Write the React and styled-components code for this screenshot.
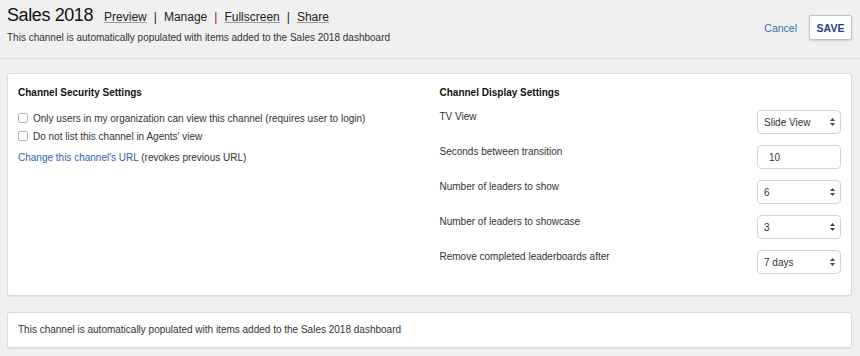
import React, { useState } from 'react'
import styled, { createGlobalStyle } from 'styled-components'

const GlobalStyle = createGlobalStyle`
  html, body {
    margin: 0;
    padding: 0;
    background: #efefef;
    font-family: "Liberation Sans", Arial, Helvetica, sans-serif;
    color: #222;
  }
`

const Page = styled.div`
  width: 860px;
  min-height: 356px;
  background: #efefef;
`

const Header = styled.div`
  display: flex;
  justify-content: space-between;
  align-items: flex-start;
  height: 59px;
  box-sizing: border-box;
  padding: 3px 8px 0 7px;
  border-bottom: 1px solid #dcdcdc;
  background: #f0f0f0;
`

const TitleBlock = styled.div`
  display: flex;
  flex-direction: column;
`

const TitleRow = styled.div`
  display: flex;
  align-items: baseline;
`

const Title = styled.h1`
  margin: 0 11px 0 0;
  font-size: 18px;
  letter-spacing: -0.4px;
  font-weight: normal;
  line-height: 24px;
  color: #111;
`

const NavLink = styled.a`
  font-size: 12px;
  color: #222;
  text-decoration: ${props => (props.plain ? 'none' : 'underline')};
  text-decoration-color: #999;
  cursor: pointer;
`

const Sep = styled.span`
  font-size: 12px;
  margin: 0 7px;
  color: ${props => (props.accent ? '#8a1a1a' : '#222')};
`

const Subtitle = styled.div`
  margin-top: 5px;
  font-size: 10px;
  color: #333;
`

const Actions = styled.div`
  display: flex;
  align-items: center;
  gap: 12px;
  margin-top: 12px;
`

const CancelLink = styled.a`
  font-size: 10.5px;
  color: #3a6fb3;
  cursor: pointer;
`

const SaveButton = styled.button`
  font-family: inherit;
  font-size: 10.5px;
  font-weight: bold;
  color: #1e4384;
  background: #fff;
  border: 1px solid #b7c2d4;
  border-radius: 2px;
  box-shadow: 0 1px 2px rgba(0, 0, 0, 0.15);
  width: 43px;
  height: 25px;
  padding: 0;
`

const Panel = styled.div`
  margin: ${props => props.top || 14}px 8px 0 7px;
  background: #fff;
  border: 1px solid #dadada;
  border-radius: 3px;
  box-shadow: 0 1px 1px rgba(0, 0, 0, 0.06);
  box-sizing: border-box;
  padding: ${props => props.pad || '10px 10px 9px'};
  font-size: 10px;
`

const Columns = styled.div`
  display: grid;
  grid-template-columns: 1fr 1fr;
  column-gap: 20px;
`

const SectionTitle = styled.div`
  font-weight: bold;
  font-size: 10px;
  color: #111;
  margin: 3px 0 ${props => props.space || 13}px;
`

const CheckRow = styled.label`
  display: flex;
  align-items: center;
  height: 18px;
  color: #333;
`

const Box = styled.input`
  width: 10px;
  height: 10px;
  margin: 0 5px 0 0;
  appearance: none;
  border: 1px solid #b4b4b4;
  border-radius: 2px;
  background: #fff;
`

const UrlLine = styled.div`
  margin-top: 7px;
  color: #333;
`

const BlueLink = styled.a`
  color: #2b63b0;
  cursor: pointer;
`

const SettingRow = styled.div`
  display: flex;
  justify-content: space-between;
  align-items: flex-start;
  height: 35px;
  color: #333;
`

const SettingLabel = styled.div`
  padding-top: 0;
`

const SelectWrap = styled.div`
  position: relative;
  width: 84px;
  height: 24px;
  margin-top: -1px;
`

const Field = styled.div`
  box-sizing: border-box;
  width: 100%;
  height: 100%;
  border: 1px solid #d4d4d4;
  border-radius: 4px;
  background: #fff;
  display: flex;
  align-items: center;
  padding-left: ${props => (props.input ? 11 : 6)}px;
  font-size: 10px;
  color: #333;
`

const Arrows = styled.svg`
  position: absolute;
  right: 6px;
  top: 8px;
`

const FooterText = styled.div`
  color: #333;
`

const Select = ({ value }) => (
  <SelectWrap>
    <Field>{value}</Field>
    <Arrows width="5" height="8" viewBox="0 0 5 8">
      <path d="M2.5 0 L5 3 L0 3 Z M0 5 L5 5 L2.5 8 Z" fill="#444" />
    </Arrows>
  </SelectWrap>
)

const settings = [
  { label: 'TV View', value: 'Slide View' },
  { label: 'Seconds between transition', value: '10', input: true },
  { label: 'Number of leaders to show', value: '6' },
  { label: 'Number of leaders to showcase', value: '3' },
  { label: 'Remove completed leaderboards after', value: '7 days' }
]

export default function App() {
  const [checks, setChecks] = useState([false, false])
  const toggle = i => setChecks(prev => prev.map((c, j) => (j === i ? !c : c)))
  const description = 'This channel is automatically populated with items added to the Sales 2018 dashboard'

  return (
    <Page>
      <GlobalStyle />
      <Header>
        <TitleBlock>
          <TitleRow>
            <Title>Sales 2018</Title>
            <NavLink>Preview</NavLink>
            <Sep>|</Sep>
            <NavLink plain>Manage</NavLink>
            <Sep accent>|</Sep>
            <NavLink>Fullscreen</NavLink>
            <Sep>|</Sep>
            <NavLink>Share</NavLink>
          </TitleRow>
          <Subtitle>{description}</Subtitle>
        </TitleBlock>
        <Actions>
          <CancelLink>Cancel</CancelLink>
          <SaveButton>SAVE</SaveButton>
        </Actions>
      </Header>

      <Panel>
        <Columns>
          <div>
            <SectionTitle space={11}>Channel Security Settings</SectionTitle>
            <CheckRow>
              <Box type="checkbox" checked={checks[0]} onChange={() => toggle(0)} />
              Only users in my organization can view this channel (requires user to login)
            </CheckRow>
            <CheckRow>
              <Box type="checkbox" checked={checks[1]} onChange={() => toggle(1)} />
              Do not list this channel in Agents' view
            </CheckRow>
            <UrlLine>
              <BlueLink>Change this channel's URL</BlueLink> (revokes previous URL)
            </UrlLine>
          </div>
          <div>
            <SectionTitle>Channel Display Settings</SectionTitle>
            {settings.map(s => (
              <SettingRow key={s.label}>
                <SettingLabel>{s.label}</SettingLabel>
                {s.input ? (
                  <SelectWrap>
                    <Field input>{s.value}</Field>
                  </SelectWrap>
                ) : (
                  <Select value={s.value} />
                )}
              </SettingRow>
            ))}
          </div>
        </Columns>
      </Panel>

      <Panel top={16} pad="11px 10px 12px">
        <FooterText>{description}</FooterText>
      </Panel>
    </Page>
  )
}
